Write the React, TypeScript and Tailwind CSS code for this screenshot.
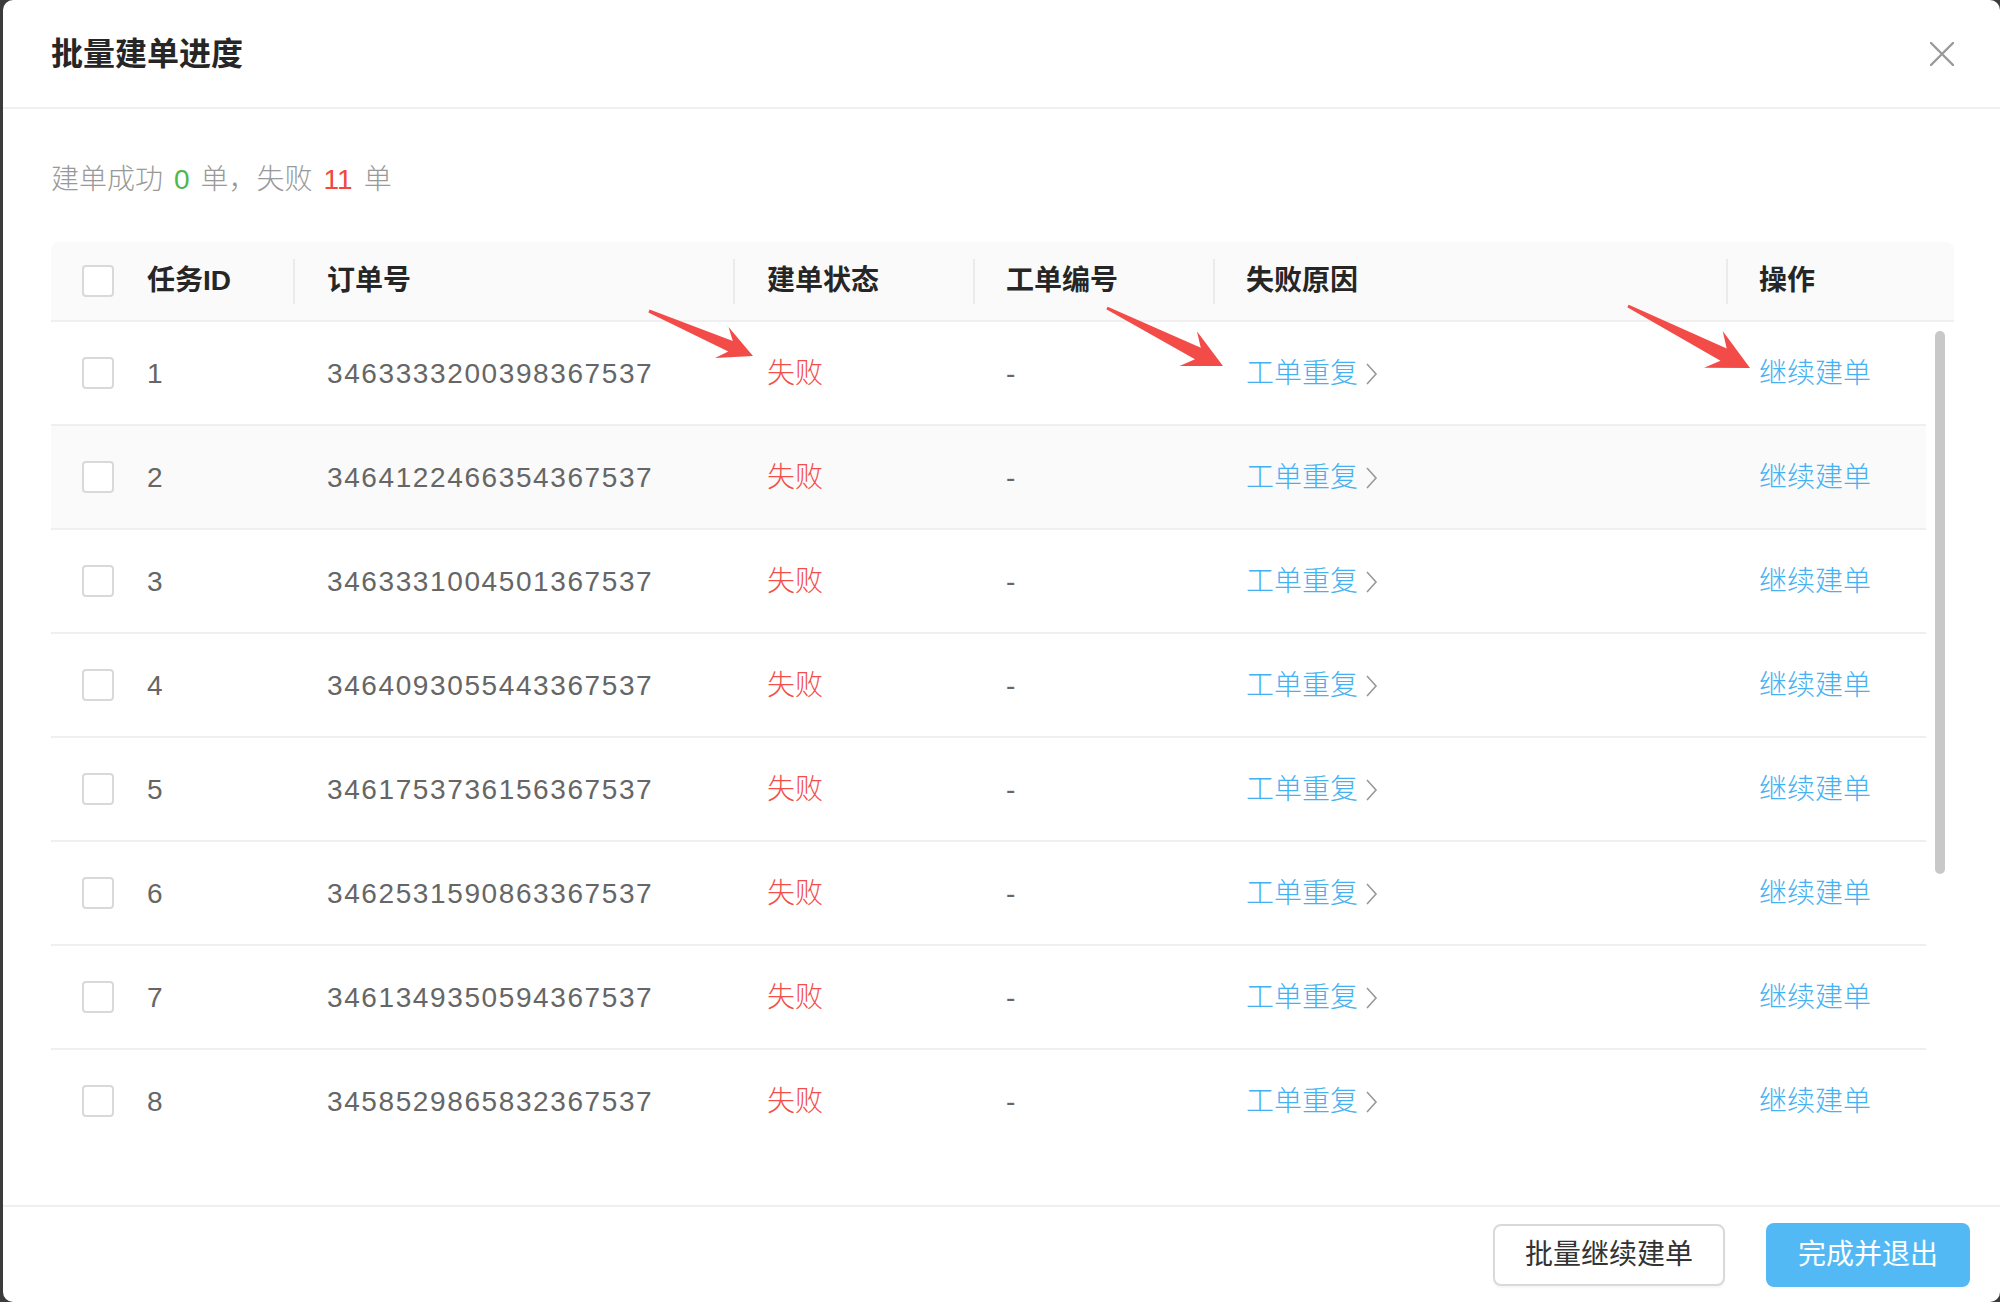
import React from "react";

const rows: [string, string][] = [
  ["1", "3463333200398367537"],
  ["2", "3464122466354367537"],
  ["3", "3463331004501367537"],
  ["4", "3464093055443367537"],
  ["5", "3461753736156367537"],
  ["6", "3462531590863367537"],
  ["7", "3461349350594367537"],
  ["8", "3458529865832367537"],
];

function arrowPoints(x0: number, y0: number, x1: number, y1: number) {
  const dx = x1 - x0;
  const dy = y1 - y0;
  const L = Math.sqrt(dx * dx + dy * dy);
  const ux = dx / L;
  const uy = dy / L;
  const nx = -uy;
  const ny = ux;
  const headLen = 0.3 * L;
  const headHalf = 0.15 * L;
  const neckAt = L - headLen * 0.72;
  const neckHalf = 0.05 * L;
  const tailHalf = 1.5;
  const p = (a: number, b: number) =>
    `${(x0 + ux * a + nx * b).toFixed(1)},${(y0 + uy * a + ny * b).toFixed(1)}`;
  return [
    p(0, -tailHalf),
    p(neckAt, -neckHalf),
    p(L - headLen, -headHalf),
    p(L, 0),
    p(L - headLen, headHalf),
    p(neckAt, neckHalf),
    p(0, tailHalf),
  ].join(" ");
}

function Checkbox() {
  return <div className="w-[32px] h-[32px] rounded-[4px] border-2 border-[#d9d9d9] bg-white" />;
}

function Sep() {
  return <div className="w-[2px] h-[45px] bg-[#ebebeb] shrink-0" />;
}

export default function App() {
  return (
    <div className="relative w-[2000px] h-[1302px] bg-[#3b3b3b] overflow-hidden font-['Liberation_Sans','Noto_Sans_CJK_SC',sans-serif]">
      <div className="ml-[3px] h-full bg-white rounded-[10px] flex flex-col">
        {/* header */}
        <div className="h-[109px] shrink-0 border-b-2 border-[#efefef] pl-[48px] pr-[46px] flex items-center justify-between">
          <div className="text-[32px] font-bold text-[#262626] leading-none">批量建单进度</div>
          <svg width="24" height="24" viewBox="0 0 24 24" className="block">
            <path d="M1 1 L23 23 M23 1 L1 23" stroke="#999999" strokeWidth="2.4" strokeLinecap="round" fill="none" />
          </svg>
        </div>

        {/* body */}
        <div className="pl-[48px] pr-[46px] pt-[51px] flex-1">
          <div className="h-[40px] flex items-center text-[28px] font-light text-[#999999] leading-none">
            <span>建单成功</span>
            <span className="mx-[11px] text-[#4cb84c]">0</span>
            <span>单，失败</span>
            <span className="mx-[11px] text-[#f2473f]">11</span>
            <span>单</span>
          </div>

          <div className="mt-[42px]">
            {/* table header */}
            <div className="h-[80px] bg-[#fafafa] rounded-t-[8px] border-b-2 border-[#efefef] flex items-center text-[28px] font-bold text-[#262626] leading-none">
              <div className="w-[64px] shrink-0 pl-[31px] flex items-center">
                <Checkbox />
              </div>
              <div className="w-[178px] shrink-0 pl-[32px]">任务ID</div>
              <div className="w-[440px] shrink-0 flex items-center">
                <Sep />
                <span className="ml-[32px]">订单号</span>
              </div>
              <div className="w-[240px] shrink-0 flex items-center">
                <Sep />
                <span className="ml-[32px]">建单状态</span>
              </div>
              <div className="w-[240px] shrink-0 flex items-center">
                <Sep />
                <span className="ml-[31px]">工单编号</span>
              </div>
              <div className="w-[513px] shrink-0 flex items-center">
                <Sep />
                <span className="ml-[31px]">失败原因</span>
              </div>
              <div className="flex-1 flex items-center">
                <Sep />
                <span className="ml-[31px]">操作</span>
              </div>
            </div>

            {/* table body */}
            <div className="flex h-[828px]">
              <div className="flex-1 overflow-hidden">
                {rows.map(([id, order], i) => (
                  <div
                    key={id}
                    className={
                      "h-[104px] pt-[2px] border-b-2 border-[#efefef] flex items-center text-[28px] font-light leading-none " +
                      (i === 1 ? "bg-[#fafafa]" : "bg-white")
                    }
                  >
                    <div className="w-[64px] shrink-0 pl-[31px] flex items-center -mt-[2px]">
                      <Checkbox />
                    </div>
                    <div className="w-[178px] shrink-0 pl-[32px] text-[#666666]">{id}</div>
                    <div className="w-[440px] shrink-0 pl-[34px] text-[#666666] tracking-[1.6px]">{order}</div>
                    <div className="w-[240px] shrink-0 pl-[34px] text-[#f24f4b]">失败</div>
                    <div className="w-[240px] shrink-0 pl-[33px] text-[#666666]">-</div>
                    <div className="w-[513px] shrink-0 pl-[33px] flex items-center text-[#45b1f2]">
                      <span>工单重复</span>
                      <svg width="13" height="22" viewBox="0 0 13 22" className="ml-[7px] block">
                        <path d="M2 1 L11 11 L2 21" stroke="#999999" strokeWidth="1.6" fill="none" />
                      </svg>
                    </div>
                    <div className="flex-1 pl-[33px] text-[#45b1f2]">继续建单</div>
                  </div>
                ))}
              </div>
              <div className="w-[28px] shrink-0 pl-[9px] pt-[9px]">
                <div className="w-[10px] h-[543px] rounded-full bg-[#c8c8c8]" />
              </div>
            </div>
          </div>
        </div>

        {/* footer */}
        <div className="h-[97px] shrink-0 border-t-2 border-[#efefef] flex items-start justify-end gap-[41px] pr-[30px] pt-[16px]">
          <button className="mt-[1px] h-[62px] px-[30px] rounded-[8px] border-2 border-[#d9d9d9] bg-white text-[28px] text-[#333333] leading-none shadow-[0_2px_2px_rgba(0,0,0,0.04)]">
            批量继续建单
          </button>
          <button className="h-[64px] px-[32px] rounded-[8px] bg-[#52b9f5] text-[28px] text-white leading-none">
            完成并退出
          </button>
        </div>
      </div>

      <svg className="absolute inset-0 pointer-events-none" width="2000" height="1302">
        <polygon points={arrowPoints(649, 311, 753, 356)} fill="#f34b47" />
        <polygon points={arrowPoints(1107, 308, 1223, 366)} fill="#f34b47" />
        <polygon points={arrowPoints(1628, 306, 1750, 368)} fill="#f34b47" />
      </svg>
    </div>
  );
}
